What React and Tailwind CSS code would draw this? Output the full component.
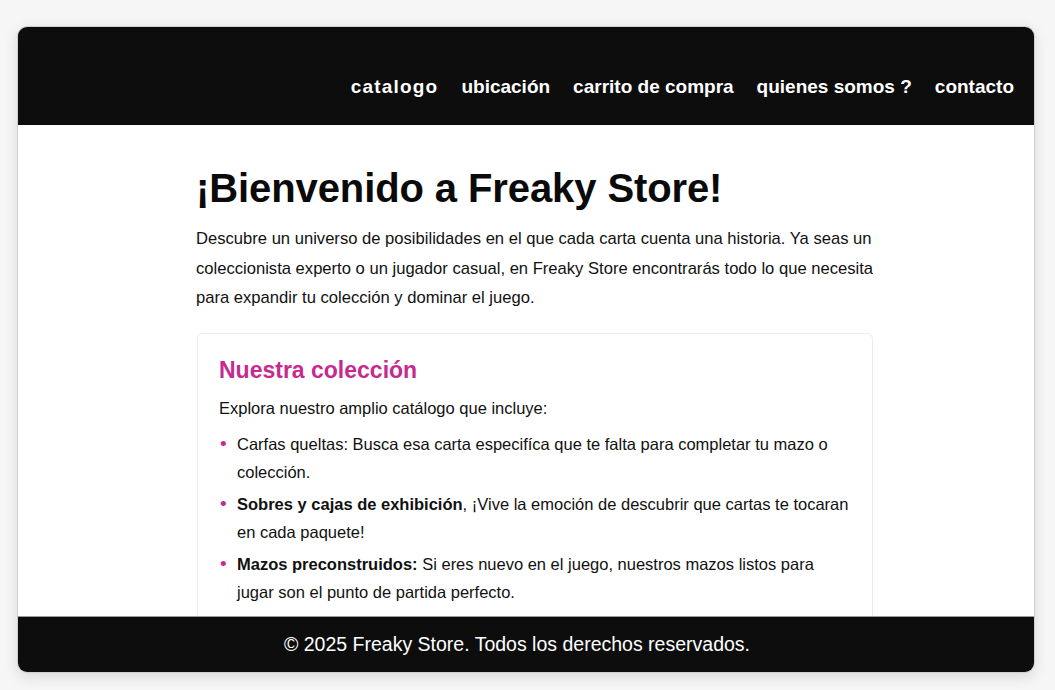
export default function App() {
  const navLinks = ["catalogo", "ubicación", "carrito de compra", "quienes somos ?", "contacto"]

  return (
    <div className="w-[1055px] h-[690px] bg-[#f6f6f6] pt-[26px] pl-[17px] pr-[20px] overflow-hidden" style={{ fontFamily: '"Liberation Sans", Arial, sans-serif' }}>
      <div className="h-[647px] flex flex-col rounded-[10px] overflow-hidden bg-white shadow-[0_4px_14px_rgba(0,0,0,0.12)] border border-[#cfcfcf]">
        {/* Header */}
        <header className="h-[98px] shrink-0 bg-[#0d0d0d] flex justify-end items-start pt-[47px] pr-[20px]">
          <nav className="flex items-center gap-[23px]">
            {navLinks.map((link, i) => (
              <a
                key={link}
                href="#"
                className={`text-white text-[19px] leading-[26px] font-semibold ${i === 0 ? "tracking-[1.2px]" : ""}`}
              >
                {link}
              </a>
            ))}
          </nav>
        </header>

        {/* Main */}
        <main className="flex-1 overflow-hidden border-b border-[#9a9a9a]">
          <div className="ml-[178px] w-[677px] pt-[39px]">
            <h1 className="text-[40px] leading-[48px] font-bold text-[#0a0a0a] tracking-[-0.1px]">¡Bienvenido a Freaky Store!</h1>
            <p className="mt-[12px] text-[16.6px] leading-[29.5px] text-[#111] whitespace-nowrap overflow-hidden">
              Descubre un universo de posibilidades en el que cada carta cuenta una historia. Ya seas un<br />
              coleccionista experto o un jugador casual, en Freaky Store encontrarás todo lo que necesitas<br />
              para expandir tu colección y dominar el juego.
            </p>

            <section className="mt-[20px] ml-[1px] border border-[#ececec] rounded-[6px] px-[21px] pt-[21px] pb-[20px]">
              <h2 className="text-[23px] leading-[30px] font-semibold text-[#c72a8e]">Nuestra colección</h2>
              <p className="mt-[9px] text-[16.5px] leading-[28px] text-[#111]">Explora nuestro amplio catálogo que incluye:</p>
              <ul className="mt-[8px] flex flex-col gap-[4px] text-[16.5px] leading-[28px] text-[#111]">
                <li className="flex">
                  <span className="w-[18px] shrink-0 text-[#c72a8e] text-[19px] leading-[28px] pl-[1px]">•</span>
                  <span>Carfas queltas: Busca esa carta especifíca que te falta para completar tu mazo o colección.</span>
                </li>
                <li className="flex">
                  <span className="w-[18px] shrink-0 text-[#c72a8e] text-[19px] leading-[28px] pl-[1px]">•</span>
                  <span><strong className="font-semibold">Sobres y cajas de exhibición</strong>, ¡Vive la emoción de descubrir que cartas te tocaran en cada paquete!</span>
                </li>
                <li className="flex">
                  <span className="w-[18px] shrink-0 text-[#c72a8e] text-[19px] leading-[28px] pl-[1px]">•</span>
                  <span><strong className="font-semibold">Mazos preconstruidos:</strong> Si eres nuevo en el juego, nuestros mazos listos para jugar son el punto de partida perfecto.</span>
                </li>
              </ul>
            </section>
          </div>
        </main>

        {/* Footer */}
        <footer className="h-[55px] shrink-0 bg-[#0d0d0d] flex items-center justify-center pr-[18px]">
          <p className="text-white text-[19.5px]">© 2025 Freaky Store. Todos los derechos reservados.</p>
        </footer>
      </div>
    </div>
  )
}
